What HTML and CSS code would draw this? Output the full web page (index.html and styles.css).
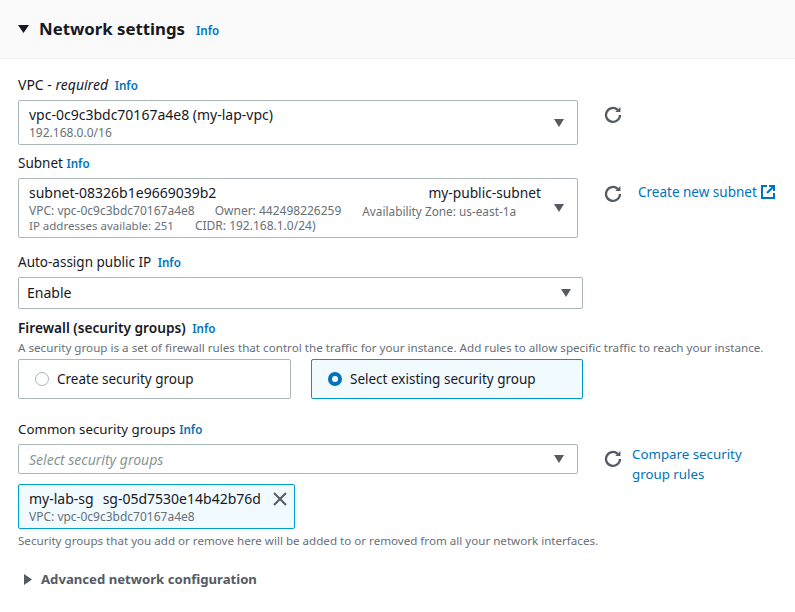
FILE: index.html
```html
<!DOCTYPE html>
<html lang="en">
<head>
<meta charset="UTF-8" />
<title>Network settings</title>
<link rel="stylesheet" href="styles.css">
</head>
<body>

<header class="panel-header">
  <svg class="caret-down" viewBox="0 0 11 8" aria-hidden="true"><path d="M0 0h11L5.5 8z"/></svg>
  <h2>Network settings</h2>
  <a class="info info-head" href="#">Info</a>
</header>

<main class="panel-body">

  <div class="label label-vpc">VPC - <em>required</em> <a class="info info-gap" href="#">Info</a></div>
  <div class="row">
    <div class="select select-vpc">
      <div class="main-text">vpc-0c9c3bdc70167a4e8 (my-lap-vpc)</div>
      <div class="sub-text">192.168.0.0/16</div>
      <span class="arrow"></span>
    </div>
    <svg class="refresh" viewBox="0 0 16 16" aria-hidden="true"><path d="M14.2 8a6.2 6.2 0 1 1-2-4.6"/><path class="tip" d="M14.6 0.8v4.6h-4.6z"/></svg>
  </div>

  <div class="label label-subnet">Subnet <a class="info" href="#">Info</a></div>
  <div class="row">
    <div class="select select-subnet">
      <div class="main-text split"><span>subnet-08326b1e9669039b2</span><span class="subnet-name">my-public-subnet</span></div>
      <div class="sub-text meta">
        <span>VPC: vpc-0c9c3bdc70167a4e8</span><span>Owner: 442498226259</span><span class="zone">Availability Zone: us-east-1a</span>
      </div>
      <div class="sub-text meta meta-second">
        <span class="ip-count">IP addresses available: 251</span><span>CIDR: 192.168.1.0/24)</span>
      </div>
      <span class="arrow"></span>
    </div>
    <svg class="refresh refresh-subnet" viewBox="0 0 16 16" aria-hidden="true"><path d="M14.2 8a6.2 6.2 0 1 1-2-4.6"/><path class="tip" d="M14.6 0.8v4.6h-4.6z"/></svg>
    <a class="link create-link" href="#">Create new subnet
      <svg class="external" viewBox="0 0 14 14" aria-hidden="true"><path d="M6 1H1v12h12V8"/><path d="M8 1h5v5M13 1L6 8"/></svg>
    </a>
  </div>

  <div class="label label-ip">Auto-assign public IP <a class="info info-gap" href="#">Info</a></div>
  <div class="select select-ip">
    <span class="main-text">Enable</span>
    <span class="arrow"></span>
  </div>

  <div class="label label-firewall"><strong>Firewall (security groups)</strong> <a class="info info-gap" href="#">Info</a></div>
  <div class="desc">A security group is a set of firewall rules that control the traffic for your instance. Add rules to allow specific traffic to reach your instance.</div>
  <div class="tiles">
    <div class="tile"><span class="radio"></span>Create security group</div>
    <div class="tile selected"><span class="radio checked"></span>Select existing security group</div>
  </div>

  <div class="label label-common">Common security groups <a class="info" href="#">Info</a></div>
  <div class="row">
    <div class="select select-common">
      <span class="placeholder">Select security groups</span>
      <span class="arrow"></span>
    </div>
    <svg class="refresh refresh-common" viewBox="0 0 16 16" aria-hidden="true"><path d="M14.2 8a6.2 6.2 0 1 1-2-4.6"/><path class="tip" d="M14.6 0.8v4.6h-4.6z"/></svg>
    <a class="link compare-link" href="#">Compare security group rules</a>
  </div>

  <div class="token">
    <div class="main-text"><span class="token-name">my-lab-sg</span>sg-05d7530e14b42b76d</div>
    <div class="sub-text">VPC: vpc-0c9c3bdc70167a4e8</div>
    <svg class="close" viewBox="0 0 14 14" aria-hidden="true"><path d="M1 1l12 12M13 1L1 13"/></svg>
  </div>
  <div class="desc hint">Security groups that you add or remove here will be added to or removed from all your network interfaces.</div>

  <div class="advanced">
    <svg class="caret-right" viewBox="0 0 8 11" aria-hidden="true"><path d="M0 0v11l8-5.5z"/></svg>
    <span>Advanced network configuration</span>
  </div>

</main>

</body>
</html>
```

FILE: styles.css
```css
* {
  margin: 0; padding: 0; box-sizing: border-box;
}
html, body {
  height: 100%;
  overflow: hidden;
  background: #fff;
  color: #16191f;
  font-family: "Noto Sans", "Open Sans", sans-serif;
  font-size: 13.5px;
  line-height: 20px;
}
a {
  text-decoration: none;
}

/* header */
.panel-header {
  height: 59px;
  background: #fafafa;
  border-bottom: 1px solid #eaeded;
  display: flex;
  align-items: center;
  padding-left: 18px;
}
.panel-header h2 {
  font-size: 16.8px;
  font-weight: 700;
  margin-left: 10px;
}
.caret-down {
  width: 11px;
  height: 8px;
  fill: #16191f;
}
.info {
  color: #0073bb;
  font-size: 11.6px;
  font-weight: 600;
}
.info-gap {
  margin-left: 3px;
}
.info-head {
  margin: 4px 0 0 11px;
}

/* form */
.panel-body {
  padding: 16px 12px 0 18px;
}
.label {
  height: 20px;
}
.label-vpc { font-size: 14px; }
.label-subnet { margin-top: 8px; }
.label-ip { margin-top: 14px; }
.label-firewall { margin-top: 9px; }
.label-common {
  margin-top: 20px;
  font-size: 13.3px;
}
.label strong {
  font-weight: 600;
  font-size: 13.7px;
}
.row {
  display: flex;
  align-items: flex-start;
}
.select {
  position: relative;
  width: 560px;
  margin-top: 5px;
  border: 1px solid #aab7b8;
  border-radius: 2px;
  padding: 4px 10px;
  flex-shrink: 0;
}
.select-vpc { height: 45px; }
.select-subnet { height: 60px; }
.select-ip {
  width: 565px;
  height: 32px;
  padding: 5px 8px;
}
.select-common {
  height: 30px;
  padding: 5px 10px;
}
.main-text {
  font-size: 14px;
  line-height: 20px;
}
.split {
  display: flex;
  justify-content: space-between;
  padding-right: 26px;
}
.subnet-name {
  font-size: 13.75px;
}
.sub-text {
  color: #687078;
  font-size: 12px;
  line-height: 16px;
}
.meta {
  display: flex;
  gap: 20px;
}
.zone {
  margin-left: 1px;
  font-size: 11.8px;
}
.meta-second {
  gap: 21px;
  line-height: 14px;
}
.ip-count {
  font-size: 11.5px;
}
.arrow {
  position: absolute;
  right: 13px;
  top: 50%;
  margin-top: -4px;
  border-left: 5.5px solid transparent;
  border-right: 5.5px solid transparent;
  border-top: 8px solid #545b64;
}
.select-ip .arrow {
  right: 11px;
}
.placeholder {
  color: #879596;
  font-size: 14px;
  font-style: italic;
}
.refresh {
  width: 18px;
  height: 18px;
  margin: 11px 0 0 26px;
  flex-shrink: 0;
  fill: none;
  stroke: #545b64;
  stroke-width: 2;
}
.refresh .tip {
  fill: #545b64;
  stroke: none;
}
.refresh-subnet { margin-top: 12px; }
.refresh-common { margin-top: 11px; }
.link {
  color: #0073bb;
  font-size: 13.5px;
}
.create-link {
  display: flex;
  align-items: center;
  gap: 4px;
  margin: 9px 0 0 16px;
  white-space: nowrap;
}
.external {
  width: 14px;
  height: 14px;
  fill: none;
  stroke: #0073bb;
  stroke-width: 2;
}
.compare-link {
  width: 130px;
  margin: 5px 0 0 10px;
  font-size: 13.3px;
}
.desc {
  color: #687078;
  font-size: 11.65px;
  line-height: 14px;
  white-space: nowrap;
}
.label-firewall + .desc {
  margin-top: 3px;
}
.tiles {
  display: flex;
  gap: 20px;
  margin-top: 4px;
}
.tile {
  display: flex;
  align-items: center;
  width: 273px;
  height: 40px;
  border: 1px solid #aab7b8;
  border-radius: 2px;
  padding-left: 16px;
}
.tile.selected {
  width: 272px;
  border-color: #0099c4;
  background: #f1faff;
}
.radio {
  width: 14px;
  height: 14px;
  margin-right: 8px;
  border: 1px solid #aab7b8;
  border-radius: 50%;
  background: #fff;
}
.radio.checked {
  border: 4px solid #0073bb;
}

/* selected token */
.token {
  position: relative;
  width: 277px;
  height: 45px;
  padding: 4px 10px;
  border: 1px solid #00a1c9;
  border-radius: 2px;
  background: #f1faff;
  white-space: nowrap;
}
.token-name {
  margin-right: 9px;
}
.close {
  position: absolute;
  right: 7px;
  top: 7px;
  width: 14px;
  height: 14px;
  fill: none;
  stroke: #545b64;
  stroke-width: 2;
}
.hint {
  margin-top: 5px;
  font-size: 11.6px;
}

/* collapsed section */
.advanced {
  display: flex;
  align-items: center;
  margin: 21px 0 0 6px;
  color: #545b64;
  font-size: 13.15px;
  font-weight: 700;
}
.caret-right {
  width: 8px;
  height: 11px;
  margin-right: 9px;
  fill: #545b64;
}
```
